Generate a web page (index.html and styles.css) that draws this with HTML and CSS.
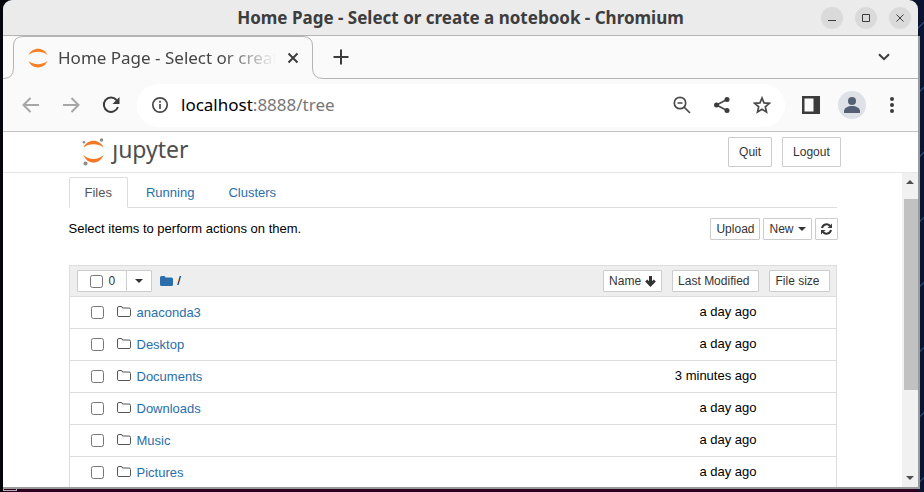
FILE: index.html
```html
<!DOCTYPE html>
<html lang="en">
<head>
<meta charset="utf-8">
<title>Home Page - Select or create a notebook</title>
<link rel="stylesheet" href="styles.css">
</head>
<body>
<div class="window">
  <header class="titlebar">
    <h1>Home Page - Select or create a notebook - Chromium</h1>
    <div class="window-controls">
      <button aria-label="Minimize"><svg width="22" height="22" viewBox="0 0 22 22"><path d="M7 13.500h8"/></svg></button>
      <button aria-label="Maximize"><svg width="22" height="22" viewBox="0 0 22 22"><path d="M7.500 7.500h7v7h-7z"/></svg></button>
      <button aria-label="Close"><svg width="22" height="22" viewBox="0 0 22 22"><path d="M7.500 7.500l7 7M14.500 7.500l-7 7"/></svg></button>
    </div>
  </header>
  <div class="browser">
    <div class="tabstrip">
      <div class="tab">
        <svg class="tab-outline" width="320" height="43" viewBox="0 0 320 43"><path d="M0 42.500H1Q10.500 42 10.500 32V10Q10.500 .5 20 .5H300Q309.500 .5 309.500 10V32Q309.500 42.500 320 42.500"/></svg>
        <svg class="favicon" width="20" height="20" viewBox="0 0 20 20"><path d="M.5 7C4-1.500 16-1.500 19.500 7 14 2.800 6 2.800 .5 7zM.5 13C4 21.500 16 21.500 19.500 13 14 17.200 6 17.200 .5 13z"/></svg>
        <span class="tab-title">Home Page - Select or create a notebook</span>
        <button class="tab-close" aria-label="Close tab"><svg width="12" height="12" viewBox="0 0 12 12"><path d="M1.500 1.500l9 9M10.500 1.500l-9 9"/></svg></button>
      </div>
      <div class="strip-rest">
        <button aria-label="New tab"><svg width="16" height="16" viewBox="0 0 16 16"><path d="M8 .5v15M.5 8h15"/></svg></button>
        <button aria-label="Search tabs"><svg width="12" height="8" viewBox="0 0 12 8"><path d="M1 1.200l5 5 5-5"/></svg></button>
      </div>
    </div>
    <div class="toolbar">
      <div class="nav-buttons">
        <button class="dim" aria-label="Back"><svg width="18" height="16" viewBox="0 0 18 16"><path d="M17 8H2M8.500 1L1.500 8l7 7"/></svg></button>
        <button class="dim" aria-label="Forward"><svg width="18" height="16" viewBox="0 0 18 16"><path d="M1 8h15M9.500 1l7 7-7 7"/></svg></button>
        <button aria-label="Reload"><svg width="18" height="18" viewBox="0 0 18 18"><path d="M14.500 4A7.200 7.200 0 1 0 15.900 11"/><path class="solid" d="M17.500 1v7h-7z"/></svg></button>
      </div>
      <div class="address">
        <svg width="18" height="18" viewBox="0 0 18 18"><circle cx="9" cy="9" r="7.200"/><path d="M9 8v5M9 4.800v2"/></svg>
        <span class="url"><b>localhost</b>:8888/tree</span>
        <button aria-label="Zoom"><svg width="18" height="18" viewBox="0 0 18 18"><circle cx="7" cy="7" r="5.700"/><path d="M11 11l6 6M4.500 7h5"/></svg></button>
        <button aria-label="Share"><svg width="18" height="18" viewBox="0 0 18 18"><path d="M14 3.500L3.500 9 14 14.500"/><g class="solid"><circle cx="14" cy="3.500" r="2.500"/><circle cx="3.500" cy="9" r="2.500"/><circle cx="14" cy="14.500" r="2.500"/></g></svg></button>
        <button aria-label="Bookmark this page"><svg width="18" height="18" viewBox="0 0 18 18"><path d="M9 2l2 4.900 5.300.4-4 3.500 1.200 5.100L9 13.200l-4.500 2.700 1.200-5.100-4-3.500 5.300-.4z"/></svg></button>
      </div>
      <div class="tools">
        <button aria-label="Side panel"><svg width="18" height="18" viewBox="0 0 18 18"><path class="solid" fill-rule="evenodd" d="M0 0h18v18H0zM2.500 2.500v13h9v-13z"/></svg></button>
        <button class="avatar" aria-label="Profile"><svg width="28" height="28" viewBox="0 0 28 28"><circle cx="14" cy="10" r="4"/><path d="M6 22v-2c0-3 4-5 8-5s8 2 8 5v2z"/></svg></button>
        <button aria-label="Menu"><svg width="4" height="18" viewBox="0 0 4 18"><g class="solid"><circle cx="2" cy="3" r="2"/><circle cx="2" cy="9" r="2"/><circle cx="2" cy="15" r="2"/></g></svg></button>
      </div>
    </div>
    <header class="site-header">
      <div class="header-inner">
        <a class="logo" href="#" aria-label="jupyter">
          <svg width="24" height="30" viewBox="0 0 24 30"><path fill="#f37726" d="M1.500 10.500C5 1.500 18 1.500 21.500 10.500 16 6.200 7 6.200 1.500 10.500zM1.500 18C5 28 18 28 21.500 18 16 23.200 7 23.200 1.500 18z"/><g fill="#8a8a8a"><circle cx="19.500" cy="3" r="1.700"/><circle cx="2" cy="5.200" r="1.300"/><circle cx="3.500" cy="26.500" r="2"/></g></svg>
          <span>ȷupyter</span>
        </a>
        <button class="btn large">Quit</button>
        <button class="btn large">Logout</button>
      </div>
    </header>
    <div class="viewport">
      <main>
        <div class="container">
          <nav class="tabs">
            <a class="active" href="#">Files</a>
            <a href="#">Running</a>
            <a href="#">Clusters</a>
          </nav>
          <div class="actions">
            <p>Select items to perform actions on them.</p>
            <button class="btn">Upload</button>
            <button class="btn">New <i class="caret"></i></button>
            <button class="btn" aria-label="Refresh"><svg width="11" height="12" viewBox="0 0 11 12"><path class="refresh" d="M1 5A4.600 4.600 0 0 1 9 3M10 7A4.600 4.600 0 0 1 2 9"/><path class="solid" d="M11 .5V5H6.500zM0 11.500V7h4.500z"/></svg></button>
          </div>
          <table>
            <thead>
              <tr>
                <th>
                  <div class="selector">
                    <div class="group">
                      <label class="btn select-all"><input type="checkbox">0</label>
                      <button class="btn" aria-label="Select by type"><i class="caret"></i></button>
                    </div>
                    <a class="root" href="#" aria-label="Root folder"><svg width="13" height="11" viewBox="0 0 13 11"><path d="M0 1.500Q0 0 1.500 0H4Q5.500 0 5.500 1.500H11.500Q13 1.500 13 3V8.500Q13 10 11.500 10H1.500Q0 10 0 8.500z"/></svg></a>
                    <span>/</span>
                  </div>
                </th>
                <th colspan="2">
                  <div class="sorters">
                    <button class="btn">Name <svg width="11" height="11" viewBox="0 0 11 11"><path class="arrow" d="M5.500 0v8M1.200 4.500l4.300 4.300 4.300-4.300"/></svg></button>
                    <button class="btn wide">Last Modified</button>
                    <button class="btn wide">File size</button>
                  </div>
                </th>
              </tr>
            </thead>
            <tbody>
              <tr><td><div class="item"><input type="checkbox" aria-label="anaconda3"><svg width="14" height="13" viewBox="0 0 14 13"><path d="M.5 2Q.5 .5 2 .5H4Q5.500 .5 5.500 2H12Q13.500 2 13.500 3.500V9.500Q13.500 10.500 12 10.500H2Q.5 10.500 .5 9.500z"/></svg><a href="#">anaconda3</a></div></td><td>a day ago</td><td></td></tr>
              <tr><td><div class="item"><input type="checkbox" aria-label="Desktop"><svg width="14" height="13" viewBox="0 0 14 13"><path d="M.5 2Q.5 .5 2 .5H4Q5.500 .5 5.500 2H12Q13.500 2 13.500 3.500V9.500Q13.500 10.500 12 10.500H2Q.5 10.500 .5 9.500z"/></svg><a href="#">Desktop</a></div></td><td>a day ago</td><td></td></tr>
              <tr><td><div class="item"><input type="checkbox" aria-label="Documents"><svg width="14" height="13" viewBox="0 0 14 13"><path d="M.5 2Q.5 .5 2 .5H4Q5.500 .5 5.500 2H12Q13.500 2 13.500 3.500V9.500Q13.500 10.500 12 10.500H2Q.5 10.500 .5 9.500z"/></svg><a href="#">Documents</a></div></td><td>3 minutes ago</td><td></td></tr>
              <tr><td><div class="item"><input type="checkbox" aria-label="Downloads"><svg width="14" height="13" viewBox="0 0 14 13"><path d="M.5 2Q.5 .5 2 .5H4Q5.500 .5 5.500 2H12Q13.500 2 13.500 3.500V9.500Q13.500 10.500 12 10.500H2Q.5 10.500 .5 9.500z"/></svg><a href="#">Downloads</a></div></td><td>a day ago</td><td></td></tr>
              <tr><td><div class="item"><input type="checkbox" aria-label="Music"><svg width="14" height="13" viewBox="0 0 14 13"><path d="M.5 2Q.5 .5 2 .5H4Q5.500 .5 5.500 2H12Q13.500 2 13.500 3.500V9.500Q13.500 10.500 12 10.500H2Q.5 10.500 .5 9.500z"/></svg><a href="#">Music</a></div></td><td>a day ago</td><td></td></tr>
              <tr><td><div class="item"><input type="checkbox" aria-label="Pictures"><svg width="14" height="13" viewBox="0 0 14 13"><path d="M.5 2Q.5 .5 2 .5H4Q5.500 .5 5.500 2H12Q13.500 2 13.500 3.500V9.500Q13.500 10.500 12 10.500H2Q.5 10.500 .5 9.500z"/></svg><a href="#">Pictures</a></div></td><td>a day ago</td><td></td></tr>
            </tbody>
          </table>
        </div>
      </main>
      <div class="scrollbar">
        <svg width="8" height="4" viewBox="0 0 8 4"><path d="M0 4l4-4 4 4z"/></svg>
        <div class="track"><div class="thumb"></div></div>
        <svg width="8" height="4" viewBox="0 0 8 4"><path d="M0 0l4 4 4-4z"/></svg>
      </div>
    </div>
  </div>
</div>
<div class="dock"><i></i></div>
</body>
</html>
```
FILE: styles.css
```css
* { box-sizing: border-box; }
body {
  margin: 0;
  height: 100vh;
  overflow: hidden;
  display: flex;
  flex-direction: column;
  font: 13px/18px "Liberation Sans", Arial, sans-serif;
  color: #000;
  background: linear-gradient(90deg, #05060c 0 50%, transparent 50%),
    repeating-linear-gradient(135deg, #0a1430 0 24px, #34507c 25px, #0a1430 26px 46px);
}
button { font: inherit; color: inherit; border: 0; padding: 0; background: none; display: flex; align-items: center; justify-content: center; }
a { color: #296eaa; text-decoration: none; }
svg { display: block; flex: none; fill: none; stroke: #3c3c3c; stroke-width: 2; }
.solid { fill: #3c3c3c; stroke: none; }
input { margin: 0; width: 13px; height: 13px; flex: none; }

.window { flex: 1; min-height: 0; margin: 0 4px 0 3px; display: flex; flex-direction: column; }
.titlebar {
  height: 36px;
  margin-right: 2px;
  padding: 0 7px;
  display: grid;
  grid-template-columns: 1fr auto 1fr;
  align-items: center;
  background: #ebebeb;
  border-bottom: 1px solid #b4b4b4;
  border-radius: 9px 9px 0 0;
}
h1 { grid-column: 2; margin: 0; font: 700 17px/24px "Noto Sans", sans-serif; color: #3d3d3d; white-space: nowrap; }
.window-controls { display: flex; gap: 12px; justify-content: flex-end; }
.window-controls button { width: 22px; height: 22px; border-radius: 50%; background: #dadada; }
.window-controls svg { stroke-width: 1; }

.browser { flex: 1; min-height: 0; display: flex; flex-direction: column; background: #fff; border: solid #9a9a9a; border-width: 0 2px 2px 0; }
.tabstrip { height: 43px; display: flex; background: #fafafa; }
.tab { position: relative; width: 320px; padding: 0 23px 0 25px; display: flex; align-items: center; gap: 10px; }
.tab-outline { position: absolute; left: 0; top: 0; stroke: #b4b4b4; stroke-width: 1; }
.favicon { fill: #f58025; stroke: none; }
.tab-title {
  flex: 1;
  overflow: hidden;
  white-space: nowrap;
  font: 17px/24px "Noto Sans", sans-serif;
  color: #454545;
  -webkit-mask-image: linear-gradient(90deg, #000 75%, transparent);
  mask-image: linear-gradient(90deg, #000 75%, transparent);
}
.tab-close { width: 14px; }
.strip-rest { flex: 1; display: flex; justify-content: space-between; align-items: center; padding: 0 28px 0 10px; border-bottom: 1px solid #b4b4b4; }

.toolbar { height: 53px; padding: 0 24px 0 19px; display: flex; align-items: center; background: #fafafa; border-bottom: 1px solid #c4c4c4; }
.nav-buttons { display: flex; align-items: center; gap: 22px; }
.dim svg { stroke: #a6a6a6; }
.address { flex: 1; height: 43px; margin: 0 17px 0 17px; padding: 0 14px; display: flex; align-items: center; gap: 22px; background: #fff; border-radius: 22px; }
.address svg { stroke: #4a4a4a; stroke-width: 1.700; }
.url { flex: 1; margin-left: -10px; font: 17px/24px "Noto Sans", sans-serif; color: #777; }
.url b { font-weight: 400; color: #000; }
.tools { display: flex; align-items: center; gap: 18px; }
.tools button:last-child { margin-left: 6px; }
.avatar { border-radius: 50%; background: #dee1e6; }
.avatar svg { fill: #566074; stroke: none; }

.site-header { height: 41px; border-bottom: 1px solid #e7e7e7; }
.header-inner { width: 84%; max-width: 1140px; margin: 0 auto; padding: 5px 4px 0 6px; display: flex; gap: 10px; }
.logo { margin-right: auto; display: flex; gap: 6px; height: 30px; }
.logo svg { stroke: none; }
.logo span { font: 23px/24px "Noto Sans", sans-serif; color: #4e4e4e; }
.btn {
  height: 22px;
  padding: 0 5px;
  display: flex;
  align-items: center;
  gap: 4px;
  font-size: 12px;
  font-weight: 400;
  white-space: nowrap;
  color: #333;
  background: #fff;
  border: 1px solid #ccc;
  border-radius: 1px;
}
.btn.large { height: 30px; padding: 0 10px; }
.caret { border: 4px solid transparent; border-top-color: #333; border-bottom: 0; }

.viewport { flex: 1; min-height: 0; display: flex; }
main { flex: 1; overflow: hidden; padding-top: 4px; }
.container { width: 768px; max-width: 100%; margin: 0 auto; }
.tabs { display: flex; border-bottom: 1px solid #ddd; gap: 2px; }
.tabs a { height: 31px; margin-bottom: -1px; padding: 0 15px; line-height: 29px; border: 1px solid transparent; }
.tabs .active { color: #555; background: #fff; border-color: #ddd #ddd #fff; border-radius: 2px 2px 0 0; }
.actions { display: flex; align-items: center; gap: 3px; margin-right: -1px; padding: 10px 0 25px; }
.actions p { flex: 1; margin: 0; }
.refresh { stroke: #333; stroke-width: 2; }

table { width: 100%; border-collapse: separate; border-spacing: 0; border: 1px solid #ddd; }
th, td { padding: 0; font-weight: 400; }
th { height: 30px; background: #eee; }
td { height: 32px; border-top: 1px solid #ddd; }
tbody td:nth-child(2) { text-align: right; width: 160px; padding-bottom: 2px; }
tbody td:nth-child(3) { width: 79px; }
.selector { display: flex; align-items: center; padding-left: 7px; }
.selector span { margin-left: 4px; }
.group { display: flex; margin-right: 8px; }
.group .btn + .btn { margin-left: -1px; padding: 0 8px; }
.select-all { gap: 6px; padding: 0 11px 0 12px; }
.root svg { fill: #296eaa; stroke: none; }
.sorters { display: flex; justify-content: flex-end; gap: 10px; padding-right: 6px; }
.sorters .wide { padding-right: 9px; }
.arrow { stroke: #333; stroke-width: 3; }
.item { display: flex; align-items: center; padding-left: 21px; }
.item svg { margin: 0 6px 0 13px; stroke: #555; stroke-width: 1; }

.scrollbar { width: 16px; padding: 7px 0 7px; display: flex; flex-direction: column; align-items: center; gap: 15px; background: #f1f1f1; }
.scrollbar svg { fill: #505050; stroke: none; }
.track { flex: 1; width: 100%; padding-left: 2px; }
.thumb { height: 73%; background: #c1c1c1; }
.dock { height: 3px; margin: 0 6px 0 3px; background: #2c001e; }
.dock i { display: block; width: 14px; height: 2px; border: 1px solid #b8b0b6; border-top: 0; }
```
